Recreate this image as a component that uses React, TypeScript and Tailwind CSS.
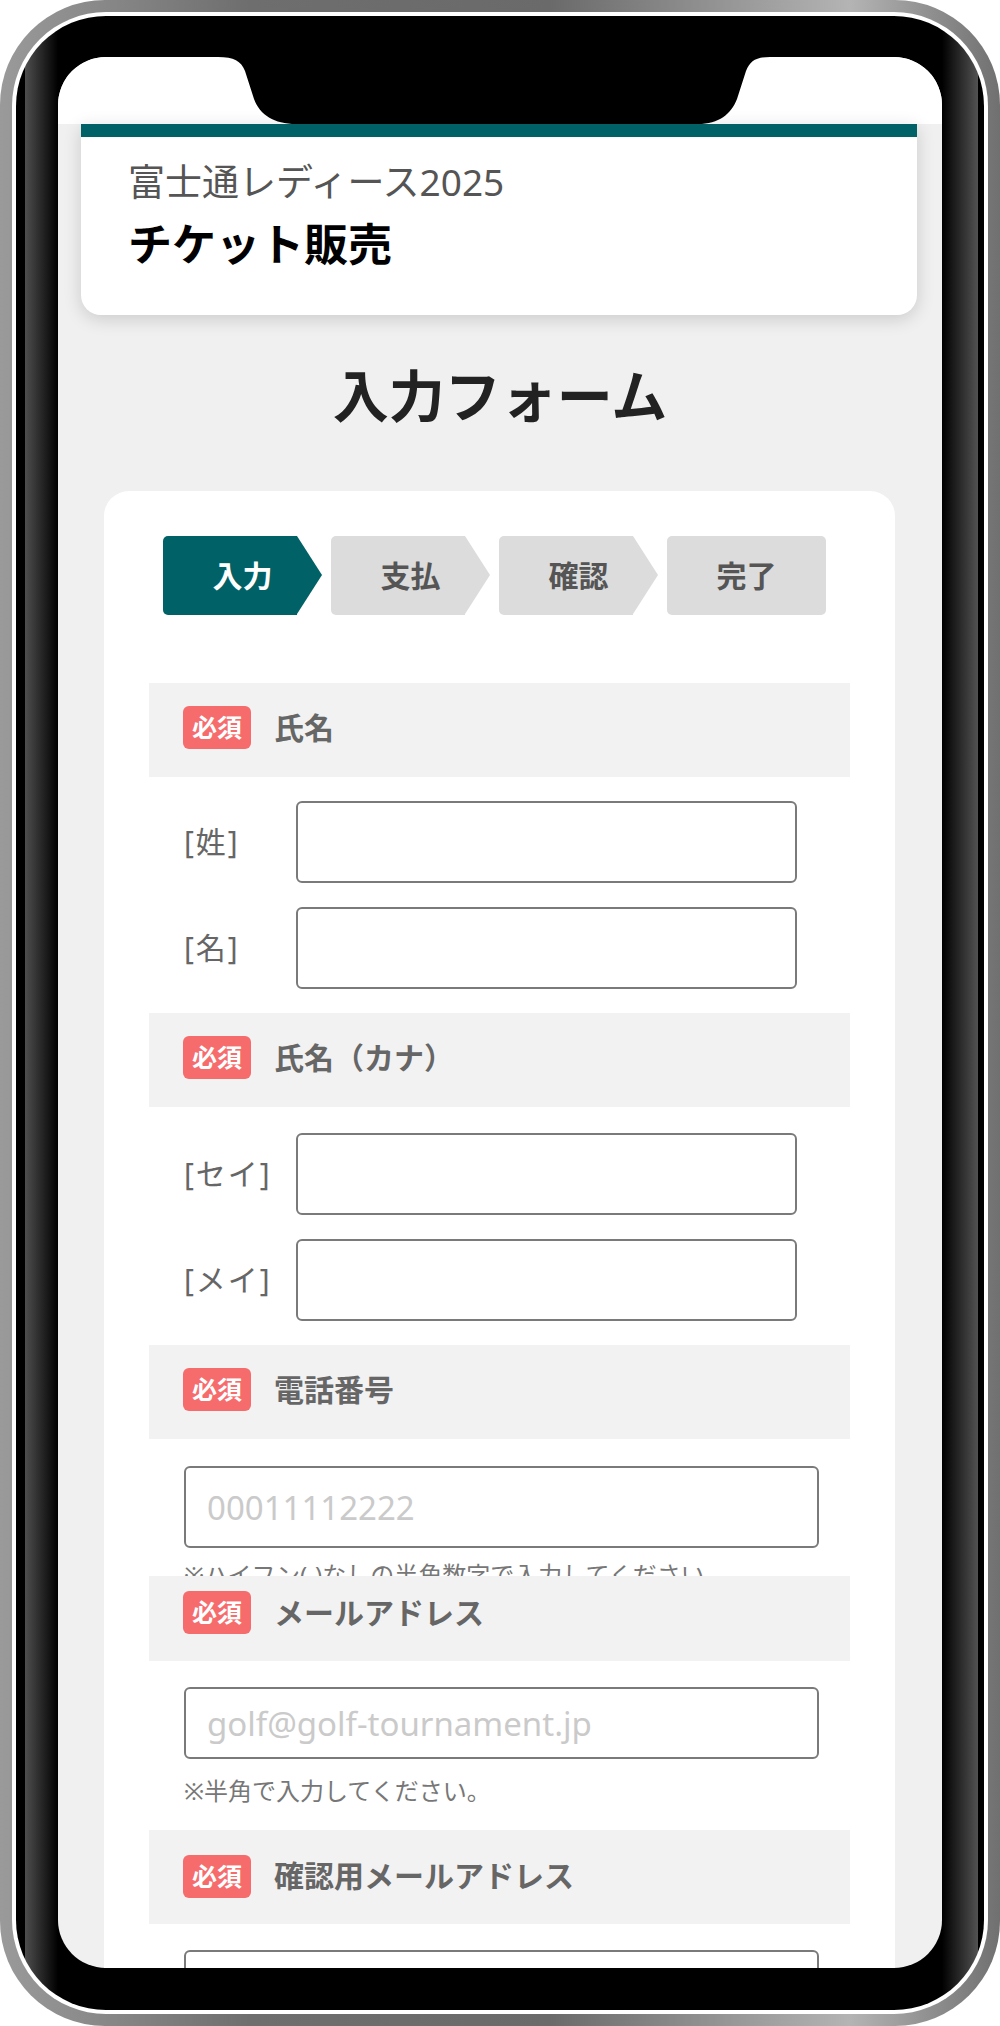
import React from "react";

// Step indicator item (arrow shaped unless it's the last one)
function Step({ label, active }: { label: string; active?: boolean }) {
  return (
    <div className="flex h-[79px] w-[159px]">
      <div
        className={`flex h-full w-[134px] items-center justify-center rounded-l-[5px] pl-[25px] text-[30px] font-bold leading-none ${
          active ? "bg-[#006266] text-white" : "bg-[#dcdcdc] text-[#555]"
        }`}
      >
        {label}
      </div>
      <div
        className={`h-0 w-0 border-y-[39.5px] border-l-[25px] border-y-transparent ${
          active ? "border-l-[#006266]" : "border-l-[#dcdcdc]"
        }`}
      />
    </div>
  );
}

function SectionHead({ label, className }: { label: string; className: string }) {
  return (
    <div className={`flex items-center bg-[#f2f2f2] pl-[34px] ${className}`}>
      <span className="flex h-[43px] w-[68px] items-center justify-center rounded-[6px] bg-[#f66b6b] text-[25px] font-bold leading-none text-white">
        必須
      </span>
      <span className="ml-[23px] text-[30px] font-bold leading-none text-[#666]">{label}</span>
    </div>
  );
}

function NameRow({ label, className }: { label: string; className: string }) {
  return (
    <div className={`flex items-center pl-[35px] ${className}`}>
      <span className="w-[112px] text-[30px] leading-none tracking-[2px] text-[#666]">{label}</span>
      <input className="h-[82px] w-[501px] rounded-[6px] border-2 border-[#7a7a7a] bg-white outline-none" />
    </div>
  );
}

function Notch() {
  return (
    <svg
      className="absolute left-0 top-0"
      width="884"
      height="68"
      viewBox="0 0 884 68"
    >
      <path
        d="M160 0 C176 0 183 4 187 14 L196 42 C202 58 216 67 238 67 L640 67 C661 67 673 57 679 42 L688 14 C692 4 698 0 712 0 Z"
        fill="#000"
      />
    </svg>
  );
}

export default function App() {
  return (
    <div className="h-[2026px] w-[1000px] bg-white font-['Noto_Sans','Noto_Sans_CJK_JP',sans-serif]">
      {/* phone frame */}
      <div className="h-full w-full rounded-[105px] bg-[linear-gradient(to_right,#9a9a9a,#6e6e6e_25%,#6a6a6a_55%,#b4b4b4_85%,#707070)] p-[12px]">
        <div className="h-full w-full rounded-[94px] bg-white p-[4px]">
          <div className="h-full w-full rounded-[90px] bg-[linear-gradient(to_right,#000_0px,#000_9px,#4e4e4e_9px,#000_42px,#000_calc(100%-42px),#525252_calc(100%-6px),#000_calc(100%-6px))] px-[42px] pb-[41px] pt-[41px]">
            {/* screen */}
            <div className="relative h-[1911px] w-[884px] overflow-hidden rounded-[48px] bg-[#f0f0f0]">
              <div className="h-[67px] bg-white" />

              {/* header card */}
              <div className="ml-[23px] mr-[25px] rounded-b-[20px] border-t-[13px] border-[#006266] bg-white pb-[49px] pl-[47px] pt-[26px] shadow-[0_4px_18px_rgba(0,0,0,0.16)]">
                <p className="text-[37px] leading-none text-[#555]">富士通レディース2025</p>
                <p className="mt-[22px] text-[44px] font-bold leading-none text-black">チケット販売</p>
              </div>

              <h1 className="mt-[52px] text-center text-[56px] font-bold leading-none text-[#222]">入力フォーム</h1>

              {/* form card */}
              <div className="ml-[46px] mr-[47px] mt-[68px] h-[1600px] rounded-[25px] bg-white px-[45px] pt-[45px]">
                <div className="ml-[14px] flex gap-[9px]">
                  <Step label="入力" active />
                  <Step label="支払" />
                  <Step label="確認" />
                  <div className="flex h-[79px] w-[159px] items-center justify-center rounded-[5px] bg-[#dcdcdc] text-[30px] font-bold leading-none text-[#555]">
                    完了
                  </div>
                </div>

                <SectionHead label="氏名" className="mt-[68px] h-[94px] pb-[5px]" />
                <NameRow label="[姓]" className="mt-[24px]" />
                <NameRow label="[名]" className="mt-[24px]" />

                <SectionHead label="氏名（カナ）" className="mt-[24px] h-[94px] pb-[5px]" />
                <NameRow label="[セイ]" className="mt-[26px]" />
                <NameRow label="[メイ]" className="mt-[24px]" />

                <SectionHead label="電話番号" className="mt-[24px] h-[94px] pb-[5px]" />
                <div className="mt-[27px] pl-[35px]">
                  <input
                    placeholder="00011112222"
                    className="h-[82px] w-[635px] rounded-[6px] border-2 border-[#7a7a7a] bg-white pl-[21px] text-[33px] outline-none placeholder:text-[#cacaca]"
                  />
                </div>
                {/* the next heading overlaps this note in the original layout */}
                <div className="h-[28px] overflow-hidden pl-[35px]">
                  <p className="pt-[15px] text-[24px] leading-none text-[#777]">
                    ※ハイフン(-)なしの半角数字で入力してください。
                  </p>
                </div>

                <SectionHead label="メールアドレス" className="h-[85px] pb-[12px]" />
                <div className="mt-[26px] pl-[35px]">
                  <input
                    placeholder="golf@golf-tournament.jp"
                    className="h-[72px] w-[635px] rounded-[6px] border-2 border-[#7a7a7a] bg-white pl-[21px] text-[33px] outline-none placeholder:text-[#cacaca]"
                  />
                </div>
                <p className="mt-[20px] pl-[35px] text-[24px] leading-none text-[#777]">※半角で入力してください。</p>

                <SectionHead label="確認用メールアドレス" className="mt-[27px] h-[94px] pb-[2px]" />
                <div className="mt-[26px] pl-[35px]">
                  <input className="h-[72px] w-[635px] rounded-[6px] border-2 border-[#7a7a7a] bg-white outline-none" />
                </div>
              </div>

              <Notch />
            </div>
          </div>
        </div>
      </div>
    </div>
  );
}
